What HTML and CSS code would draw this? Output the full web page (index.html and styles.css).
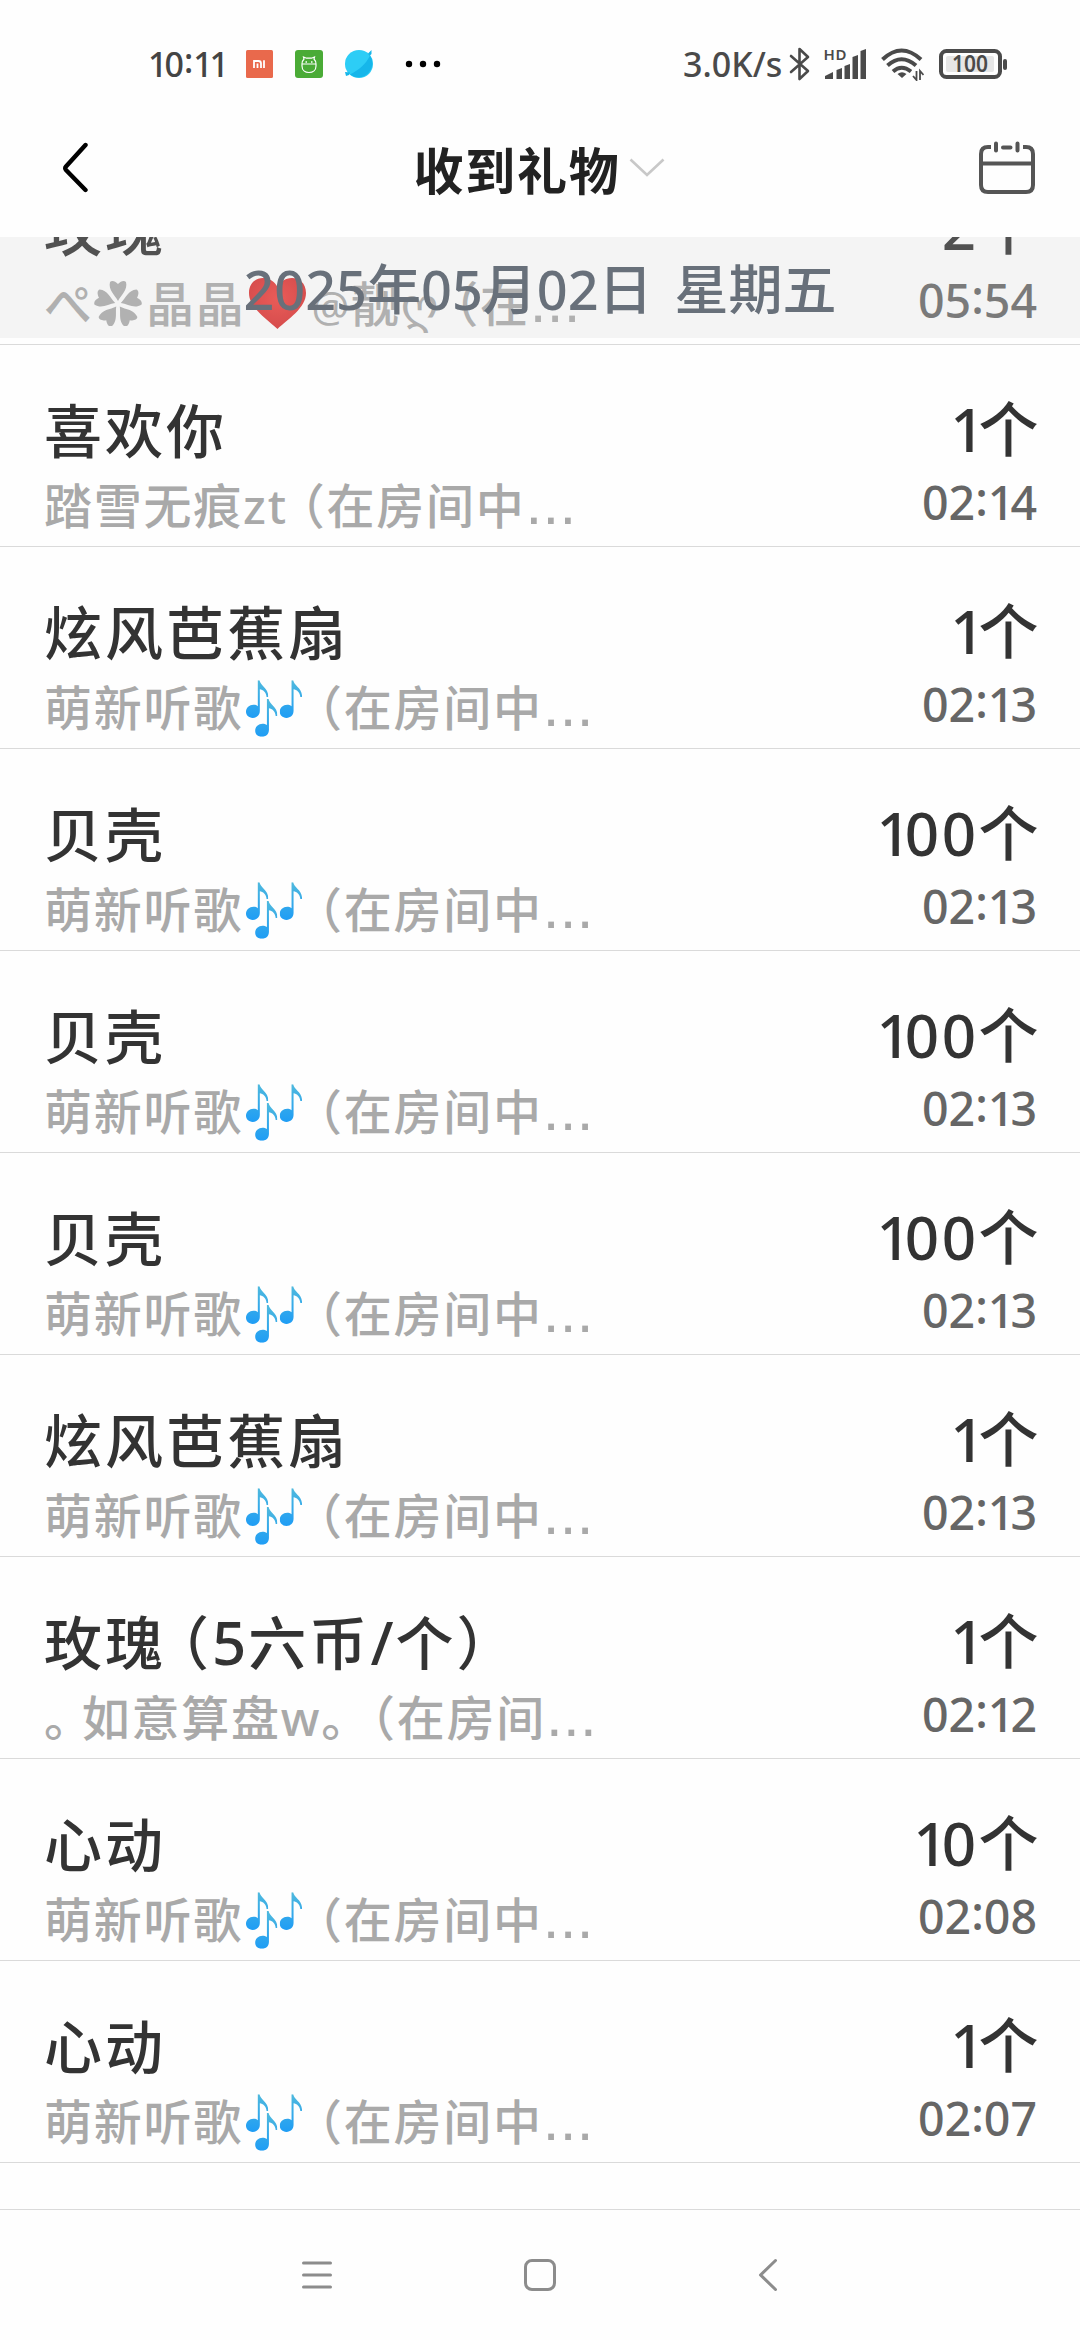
FILE: index.html
```html
<!DOCTYPE html>
<html lang="zh-CN">
<head>
<meta charset="utf-8">
<title>收到礼物</title>
<link rel="stylesheet" href="styles.css">
</head>
<body>
<svg class="defs" width="0" height="0" aria-hidden="true">
  <defs>
    <linearGradient id="blue" x1="0" y1="0" x2="0" y2="1"><stop offset="0" stop-color="#4fb9dd"/><stop offset="1" stop-color="#1f9df5"/></linearGradient>
    <radialGradient id="red" cx=".5" cy=".4" r=".6"><stop offset="0" stop-color="#f0403c"/><stop offset="1" stop-color="#d82c2c"/></radialGradient>
    <symbol id="note" viewBox="0 0 66 112"><path d="M35 0h5C42 16 68 24 66 50h-5C60 36 50 28 41 27v64C41 104 32 112 20 112 8 112 0 104 0 94 0 82 10 73 22 73c5 0 9 1 13 4z" fill="url(#blue)"/></symbol>
    <symbol id="notes" viewBox="0 0 166 168"><use href="#note" x="0" y="0" width="66" height="112"/><use href="#note" x="100" y="0" width="66" height="112"/><use href="#note" x="27" y="56" width="66" height="112"/></symbol>
  </defs>
</svg>
<div class="status">
  <div class="status-left">
    <span class="clock"><span class="s1">1</span>0<span class="colon">:</span><span class="s1">1</span>1</span>
    <svg class="app" width="27" height="28" viewBox="0 0 27 28"><rect width="27" height="28" rx="1.500" fill="#e9694c"/><path d="M8 18v-7h4.500q2.500 0 2.500 2.500V18M11.500 13.500V18M18 10.200V18" fill="none" stroke="#fff" stroke-width="1.800"/></svg>
    <svg class="app" width="28" height="28" viewBox="0 0 28 28"><rect width="28" height="28" rx="3" fill="#4aab36"/><path d="M7 14c0-3 1-4 2-5l-.5-2 3 1.200h5L19.500 7 19 9c1 1 2 2 2 5H7v2c0 4 3 6.500 7 6.500s7-2.500 7-6.500v-2" fill="none" stroke="#fff" stroke-width="1.200"/><path d="M10.500 12h1.500M16 12h1.500" stroke="#fff" stroke-width="1.500"/></svg>
    <svg class="app" width="28" height="28" viewBox="0 0 28 28"><circle cx="14" cy="14" r="14" fill="#2dcdf6"/><path d="M25 5.500A14 14 0 0 1 5 24.500C14 20 21 14 25 5.500z" fill="#16b6ea"/><path d="M23 3.500L26.500 0v4l-2 2zM5 22.500L0 22l1 4 3-1z" fill="#16b6ea"/></svg>
    <svg class="dots" width="36" height="8" viewBox="0 0 36 8"><g fill="#000"><circle cx="4" cy="4" r="3.200"/><circle cx="18" cy="4" r="3.200"/><circle cx="32" cy="4" r="3.200"/></g></svg>
  </div>
  <div class="status-right">
    <span class="speed">3.0K/s</span>
    <svg class="bt" width="22" height="34" viewBox="0 0 22 34"><path d="M2 9l17 15-8.500 8V2L19 10 2 25" fill="none" stroke="#4a4a4a" stroke-width="2.600" stroke-linejoin="round" stroke-linecap="round"/></svg>
    <svg class="sig" width="42" height="32" viewBox="0 0 42 32"><g fill="#4a4a4a"><path d="M1 31v-3l8-4v7zM12.500 22l5.500-2v11h-5.500zM20.500 18l5.500-2v15h-5.500zM28.500 9l5.500-2v24h-5.500zM36.500 3l5.500-2v30h-5.500z"/><text class="hd" x="-.5" y="12" textLength="23">HD</text></g></svg>
    <svg class="wifi" width="43" height="34" viewBox="0 0 43 34"><g fill="none" stroke="#4a4a4a" stroke-width="4"><path d="M1.500 12.500q19-18 38.500 0M6.500 18.500q14-12.500 28.500 0M12 24.500q8.500-7.500 18 0"/></g><path d="M16.500 27q4.500-3.500 9 0l-4.500 4z" fill="#4a4a4a"/><path d="M35.500 24v9l-3.500-4M39 33v-9l3.500 4" fill="none" stroke="#4a4a4a" stroke-width="1.800"/></svg>
    <svg class="bat" width="69" height="30" viewBox="0 0 69 30"><rect x="2" y="2" width="59" height="26" rx="5.500" fill="none" stroke="#4a4a4a" stroke-width="4"/><rect x="7" y="7" width="48" height="16" rx="2" fill="#e6e6e6"/><path d="M66 12v7" stroke="#4a4a4a" stroke-width="4" stroke-linecap="round"/><text class="pct" x="13" y="23" textLength="36" lengthAdjust="spacingAndGlyphs">100</text></svg>
  </div>
</div>
<header class="header">
  <svg width="28" height="52" viewBox="0 0 28 52"><path d="M24.500 3L5 24.500q-1.500 1.800 0 3.500L24.500 48" fill="none" stroke="#000" stroke-width="4.400" stroke-linecap="round"/></svg>
  <h1 class="heading"><span>收到礼物</span><svg width="36" height="20" viewBox="0 0 36 20"><path d="M1.500 1.500L18 17 34.500 1.500" fill="none" stroke="#c8c8c8" stroke-width="2.600"/></svg></h1>
  <svg width="56" height="54" viewBox="0 0 56 54"><g fill="none" stroke="#555" stroke-width="4"><path d="M12 6H9Q2 6 2 13v31q0 7 7 7h38q7 0 7-7V13q0-7-7-7h-3M2 22.500h52"/><path d="M17 2.500v7M38.500 2.500v7M24 6.500h7.500" stroke-linecap="round"/></g></svg>
</header>
<main class="list">
  <div class="date">2025年05月02日<span class="gap"></span>星期五</div>
  <div class="row first">
    <div class="who"><div class="name">玫瑰</div><div class="sub"><span class="pe">ぺ</span><svg class="flower" width="48" height="46" viewBox="-24 -24 48 46"><g fill="#aaa"><path id="petal" d="M0-3C-3-9-10-14-8-22c2-2 5-1 8 2 3-3 6-4 8-2 2 8-5 13-8 19z"/><use href="#petal" transform="rotate(72)"/><use href="#petal" transform="rotate(144)"/><use href="#petal" transform="rotate(216)"/><use href="#petal" transform="rotate(288)"/></g></svg>晶晶<svg class="heart" width="57" height="52" viewBox="0 0 57 52"><path d="M28.500 51C18 41 0 30 0 15 0 5 7 0 14 0c7 0 12 4 14.500 9C31 4 36 0 43 0c7 0 14 5 14 15 0 15-18 26-28.500 36z" fill="url(#red)"/></svg><span class="at">@</span>靓<span class="geo">ღ</span><span class="p0">（</span>在<span class="el">...</span></div></div>
    <div class="info"><div class="count">2个</div><div class="time">05<span class="colon">:</span>54</div></div>
  </div>
  <div class="row">
    <div class="who"><div class="name">喜欢你</div><div class="sub">踏雪无痕<span class="zt">zt</span><span class="p1">（</span>在房间中<span class="el">...</span></div></div>
    <div class="info"><div class="count"><span class="one">1</span>个</div><div class="time">02<span class="colon">:</span><span class="s1">1</span>4</div></div>
  </div>
  <div class="row">
    <div class="who"><div class="name">炫风芭蕉扇</div><div class="sub">萌新听歌<svg class="music"><use href="#notes"/></svg><span class="p2">（</span>在房间中<span class="el">...</span></div></div>
    <div class="info"><div class="count"><span class="one">1</span>个</div><div class="time">02<span class="colon">:</span><span class="s1">1</span>3</div></div>
  </div>
  <div class="row">
    <div class="who"><div class="name">贝壳</div><div class="sub">萌新听歌<svg class="music"><use href="#notes"/></svg><span class="p2">（</span>在房间中<span class="el">...</span></div></div>
    <div class="info"><div class="count"><span class="one">1</span>00个</div><div class="time">02<span class="colon">:</span><span class="s1">1</span>3</div></div>
  </div>
  <div class="row">
    <div class="who"><div class="name">贝壳</div><div class="sub">萌新听歌<svg class="music"><use href="#notes"/></svg><span class="p2">（</span>在房间中<span class="el">...</span></div></div>
    <div class="info"><div class="count"><span class="one">1</span>00个</div><div class="time">02<span class="colon">:</span><span class="s1">1</span>3</div></div>
  </div>
  <div class="row">
    <div class="who"><div class="name">贝壳</div><div class="sub">萌新听歌<svg class="music"><use href="#notes"/></svg><span class="p2">（</span>在房间中<span class="el">...</span></div></div>
    <div class="info"><div class="count"><span class="one">1</span>00个</div><div class="time">02<span class="colon">:</span><span class="s1">1</span>3</div></div>
  </div>
  <div class="row">
    <div class="who"><div class="name">炫风芭蕉扇</div><div class="sub">萌新听歌<svg class="music"><use href="#notes"/></svg><span class="p2">（</span>在房间中<span class="el">...</span></div></div>
    <div class="info"><div class="count"><span class="one">1</span>个</div><div class="time">02<span class="colon">:</span><span class="s1">1</span>3</div></div>
  </div>
  <div class="row">
    <div class="who"><div class="name">玫瑰<span class="pn">（</span><span class="num">5</span>六币<span class="num">/</span>个）</div><div class="sub"><span class="stop">。</span>如意算盘<span class="w">w</span>。<span class="p3">（</span>在房间<span class="el">...</span></div></div>
    <div class="info"><div class="count"><span class="one">1</span>个</div><div class="time">02<span class="colon">:</span><span class="s1">1</span>2</div></div>
  </div>
  <div class="row">
    <div class="who"><div class="name">心动</div><div class="sub">萌新听歌<svg class="music"><use href="#notes"/></svg><span class="p2">（</span>在房间中<span class="el">...</span></div></div>
    <div class="info"><div class="count"><span class="one">1</span>0个</div><div class="time">02<span class="colon">:</span>08</div></div>
  </div>
  <div class="row">
    <div class="who"><div class="name">心动</div><div class="sub">萌新听歌<svg class="music"><use href="#notes"/></svg><span class="p2">（</span>在房间中<span class="el">...</span></div></div>
    <div class="info"><div class="count"><span class="one">1</span>个</div><div class="time">02<span class="colon">:</span>07</div></div>
  </div>
</main>
<nav class="nav">
  <svg width="32" height="34" viewBox="0 0 32 34"><path d="M2.500 5h27M2.500 17h27M2.500 29h27" stroke="#8c8c8c" stroke-width="3" stroke-linecap="round"/></svg>
  <svg width="32" height="34" viewBox="0 0 32 34"><rect x="1.500" y="2.500" width="29" height="29" rx="6.500" fill="none" stroke="#8c8c8c" stroke-width="3"/></svg>
  <svg width="32" height="34" viewBox="0 0 32 34"><path d="M28.500 2.500L13.500 17l15 14.500" fill="none" stroke="#8c8c8c" stroke-width="3" stroke-linejoin="round" stroke-linecap="round"/></svg>
</nav>
</body>
</html>
```
FILE: styles.css
```css
* { box-sizing: border-box; }
body {
  margin: 0;
  width: 1080px;
  height: 2340px;
  display: flex;
  flex-direction: column;
  overflow: hidden;
  background: #fefefe;
  color: #333;
  font-family: "Noto Sans CJK SC", sans-serif;
}
svg { display: block; flex: none; }
.defs { position: absolute; }

.status {
  height: 128px;
  padding: 0 72px 0 148px;
  display: flex;
  justify-content: space-between;
  align-items: center;
  color: #444;
  font: 500 34px/40px "Noto Sans", sans-serif;
}
.status-left, .status-right { display: flex; align-items: center; }
.clock { width: 98px; white-space: nowrap; }
.clock .s1 { letter-spacing: -3px; }
.app { margin-right: 22px; }
.dots { margin-left: 10px; }
.speed { width: 106px; color: #4a4a4a; white-space: nowrap; }
.bt { margin-right: 13px; }
.sig { margin-right: 15px; overflow: visible; }
.wifi { margin-right: 15px; }
.hd { font: 600 15px "Noto Sans", sans-serif; }
.pct { font: 600 23px "Noto Sans", sans-serif; fill: #4a4a4a; }

.header {
  height: 109px;
  padding: 0 45px 30px 61px;
  display: flex;
  justify-content: space-between;
  align-items: center;
}
.heading {
  margin: 0 0 0 10px;
  display: flex;
  align-items: center;
  gap: 8px;
  color: #222;
  font-size: 50px;
  line-height: 60px;
  font-weight: 700;
  letter-spacing: 1.8px;
}

.list {
  position: relative;
  flex: 1;
  overflow: hidden;
}
.date {
  position: absolute;
  z-index: 1;
  inset: 0 0 auto 0;
  height: 101px;
  display: flex;
  justify-content: center;
  background: rgba(204, 204, 204, .2);
  color: #68707a;
  font: 500 54px/104px "Noto Sans", "Noto Sans CJK SC", sans-serif;
}
.gap { width: 22px; }
.row {
  height: 202px;
  padding: 51px 43px 0 44px;
  display: flex;
  justify-content: space-between;
  border-bottom: 1px solid #dadada;
  white-space: nowrap;
}
.row.first { margin-top: -94px; }
.name {
  height: 70px;
  line-height: 64px;
  font-size: 58px;
  font-weight: 500;
  letter-spacing: 3px;
}
.num { font-family: "Noto Sans", sans-serif; font-size: 60px; line-height: 0; letter-spacing: 2px; }
.pn { margin-left: -15px; }
.sub {
  height: 60px;
  margin-top: 9px;
  line-height: 56px;
  font-size: 48px;
  letter-spacing: 1.75px;
  color: #a9a9a9;
  font-weight: 500;
}
.sub svg { display: inline-block; }
.music { width: 56px; height: 57px; margin: 0 0 0 3px; vertical-align: -11px; }
.p2 { margin-left: -8px; }
.p1 { margin-left: -11px; }
.p3 { margin-left: 0; }
.p0 { margin-left: -10px; }
.zt, .w, .at { font-family: "Noto Sans", sans-serif; font-weight: 500; line-height: 0; }
.stop { margin-right: -12px; }
.el { font-family: "Liberation Sans", sans-serif; font-weight: 400; font-size: 60px; line-height: 0; letter-spacing: .3px; }
.pe { letter-spacing: 0; }
.flower { margin: 0 4px 0 2px; vertical-align: -4px; }
.heart { margin: 0 6px 0 3px; vertical-align: -8px; }
.at { font-size: 42px; font-weight: 400; }
.geo { font-family: "DejaVu Sans", sans-serif; line-height: 0; font-weight: 400; }

.info { text-align: right; }
.count {
  height: 70px;
  font: 500 60px/66px "Noto Sans", "Noto Sans CJK SC", sans-serif;
  letter-spacing: 2.5px;
  margin-right: -4px;
}
.one { letter-spacing: -6px; }
.time {
  margin-top: 9px;
  color: #666;
  font: 500 46.500px/54px "Noto Sans", sans-serif;
}
.time .s1 { letter-spacing: -4px; }
.colon { position: relative; top: -4px; }

.nav {
  height: 131px;
  padding: 0 301px;
  border-top: 1px solid #dadada;
  display: flex;
  justify-content: space-between;
  align-items: center;
}
```
